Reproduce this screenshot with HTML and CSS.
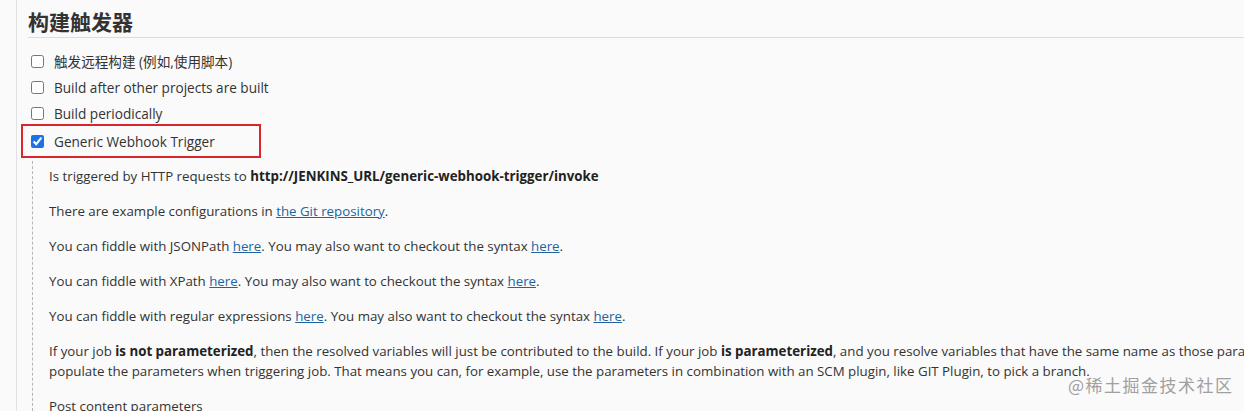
FILE: index.html
```html
<!DOCTYPE html>
<html lang="zh">
<head>
<meta charset="utf-8">
<link rel="stylesheet" href="styles.css">
</head>
<body>
<div class="page">
  <h2 class="section-title">构建触发器</h2>
  <div class="options">
    <label class="opt"><input type="checkbox"><span>触发远程构建 (例如,使用脚本)</span></label>
    <label class="opt"><input type="checkbox"><span>Build after other projects are built</span></label>
    <label class="opt"><input type="checkbox"><span>Build periodically</span></label>
    <div class="highlight">
      <label class="opt"><input type="checkbox" checked><span>Generic Webhook Trigger</span></label>
    </div>
  </div>
  <div class="details">
    <p>Is triggered by HTTP requests to <b>http://JENKINS_URL/generic-webhook-trigger/invoke</b></p>
    <p>There are example configurations in <a href="#">the Git repository</a>.</p>
    <p>You can fiddle with JSONPath <a href="#">here</a>. You may also want to checkout the syntax <a href="#">here</a>.</p>
    <p>You can fiddle with XPath <a href="#">here</a>. You may also want to checkout the syntax <a href="#">here</a>.</p>
    <p>You can fiddle with regular expressions <a href="#">here</a>. You may also want to checkout the syntax <a href="#">here</a>.</p>
    <p>If your job <b>is not parameterized</b>, then the resolved variables will just be contributed to the build. If your job <b>is parameterized</b>, and you resolve variables that have the same name as those parameters, then the plugin will<br>populate the parameters when triggering job. That means you can, for example, use the parameters in combination with an SCM plugin, like GIT Plugin, to pick a branch.</p>
    <p>Post content parameters</p>
  </div>
</div>
<div class="watermark">@稀土掘金技术社区</div>
</body>
</html>
```
FILE: styles.css
```css
html, body {
  margin: 0;
  padding: 0;
  background: #fafafa;
  height: 411px;
  overflow: hidden;
}
body {
  font-family: "Open Sans", "Noto Sans", "Noto Sans CJK SC", sans-serif;
  font-size: 13.3px;
  color: #333;
}
.page {
  margin-left: 16px;
  border-left: 1px solid #e2e2e2;
  height: 411px;
  overflow: hidden;
}
.section-title {
  margin: 0 0 0 11px;
  padding: 9px 0 3px 0;
  font-family: "Noto Sans CJK SC", sans-serif;
  font-size: 21px;
  font-weight: 700;
  line-height: 25px;
  color: #333;
  border-bottom: 1px solid #dcdcdc;
}
.options {
  padding-top: 10px;
  display: flex;
  flex-direction: column;
}
.opt {
  display: flex;
  align-items: center;
  height: 26px;
  padding-left: 14px;
  font-size: 13.6px;
}
.opt input {
  margin: 0 10px 0 0;
  width: 13px;
  height: 13px;
  accent-color: #1a73e8;
}
.opt span {
  font-family: "Open Sans", "Noto Sans CJK SC", sans-serif;
}
.highlight {
  margin-left: 4px;
  margin-top: -2px;
  width: 236px;
  border: 2px solid #d9262c;
  padding: 2px 0;
}
.highlight .opt {
  padding-left: 8px;
}
.details {
  margin-left: 15px;
  margin-top: 3px;
  border-left: 1px dashed #b5b5b5;
  padding-left: 16px;
  padding-top: 5px;
}
.details p {
  margin: 0 0 15px 0;
  line-height: 20px;
  white-space: nowrap;
}
.details a {
  color: #1d64a0;
  font-weight: 500;
  text-decoration: underline;
}
.details b {
  color: #222;
}
.watermark {
  position: absolute;
  left: 1068px;
  top: 372px;
  font-family: "Noto Sans CJK SC", sans-serif;
  font-size: 17px;
  color: #a0a0a0;
  letter-spacing: 1.5px;
}
```
